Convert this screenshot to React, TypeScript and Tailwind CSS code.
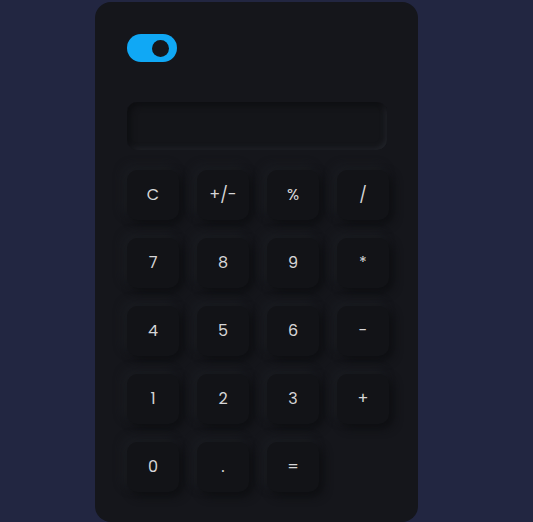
import React from 'react';

const keys = ['C', '+/-', '%', '/', '7', '8', '9', '*', '4', '5', '6', '-', '1', '2', '3', '+', '0', '.', '='];

const Key: React.FC<{ label: string }> = ({ label }) => (
  <button className="w-[52px] h-[50px] rounded-[10px] bg-[#121317] text-[#d6d6d8] text-[16px] flex items-center justify-center shadow-[4px_4px_10px_#0d0e11,-4px_-4px_10px_#1b1d22]">
    {label}
  </button>
);

export default function App() {
  return (
    <div className="min-h-[522px] bg-[#222641] pl-[95px] pt-[2px]" style={{ fontFamily: 'Poppins, "Open Sans", sans-serif' }}>
      <div className="w-[323px] h-[520px] bg-[#15161b] rounded-[16px] pt-[32px] px-[32px]">
        <div className="w-[50px] h-[28px] rounded-full bg-[#10a8f5] flex items-center justify-end pr-[8px]">
          <div className="w-[17px] h-[17px] rounded-full bg-[#15161b]" />
        </div>
        <div className="mt-[40px] w-[260px] h-[48px] rounded-[10px] bg-[#141519] shadow-[inset_3px_3px_6px_#0d0e11,inset_-2px_-2px_5px_#23252b]" />
        <div className="mt-[20px] grid grid-cols-[repeat(4,52px)] gap-x-[18px] gap-y-[18px]">
          {keys.map((k) => (
            <Key key={k} label={k} />
          ))}
        </div>
      </div>
    </div>
  );
}
